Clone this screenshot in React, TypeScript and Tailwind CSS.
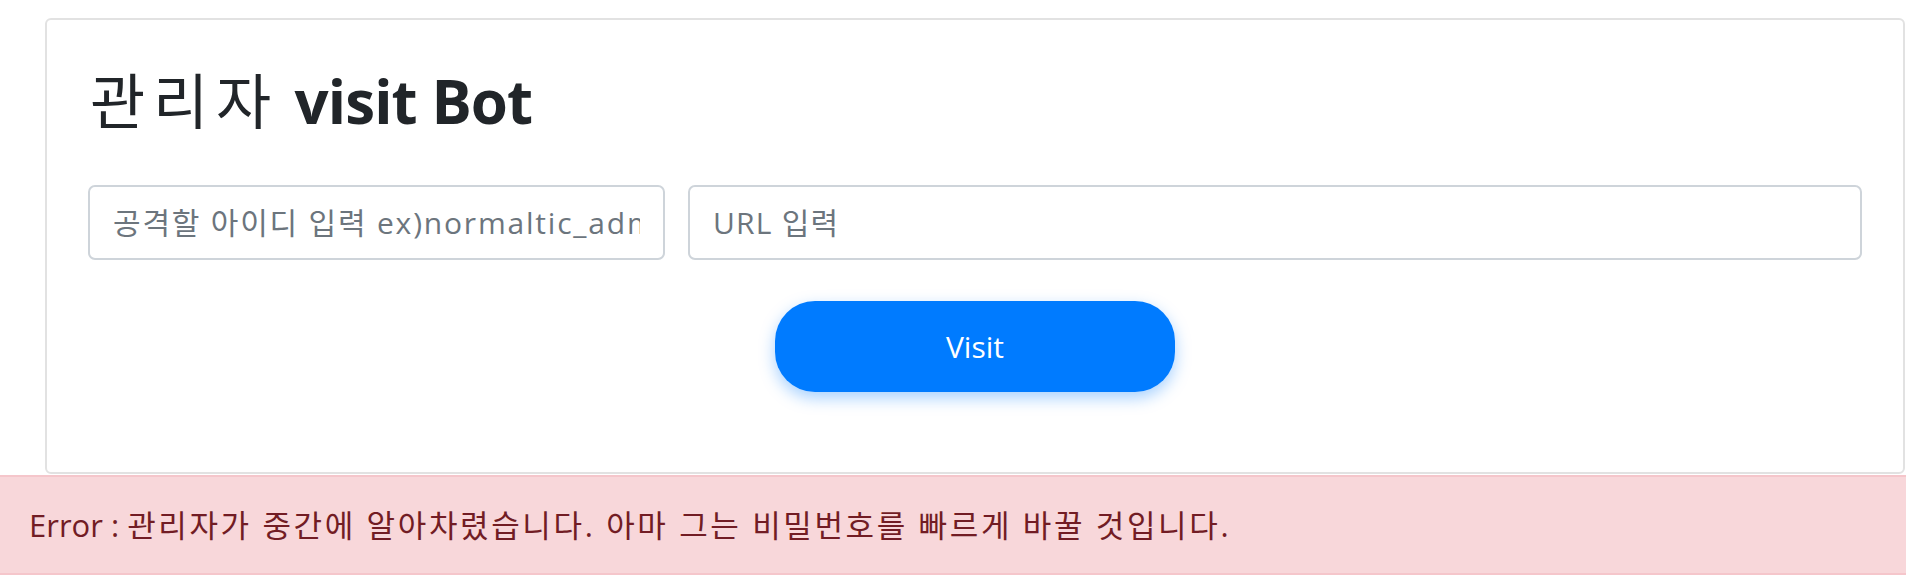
export default function App() {
  return (
    <div className="w-[1906px] h-[588px] bg-white pt-[18px] font-['Open_Sans','Noto_Sans_CJK_KR',sans-serif] text-[#212529] overflow-hidden">
      <div className="ml-[45px] mr-px h-[456px] border-2 border-[#e2e2e2] rounded-[6px] px-[41px] pt-[45px]">
        <h1 className="m-0 text-[60px] leading-[72px] font-normal">
          <span className="tracking-[0.13em] ml-[2px]">관리자</span>{" "}
          <b className="font-bold tracking-[-0.015em]">visit Bot</b>
        </h1>
        <div className="flex gap-[23px] mt-[48px]">
          <input
            className="w-[577px] h-[75px] border-2 border-[#ced4da] rounded-[7px] px-[23px] text-[30px] tracking-[0.06em] placeholder:text-[#6c757d] outline-none"
            placeholder="공격할 아이디 입력 ex)normaltic_admin"
          />
          <input
            className="flex-1 h-[75px] border-2 border-[#ced4da] rounded-[7px] px-[23px] text-[30px] tracking-[0.04em] placeholder:text-[#6c757d] outline-none"
            placeholder="URL 입력"
          />
        </div>
        <div className="flex justify-center mt-[41px]">
          <button className="w-[400px] h-[91px] rounded-[40px] bg-[#007bff] text-white text-[30px] shadow-[0_6px_16px_rgba(0,123,255,0.35)]">
            Visit
          </button>
        </div>
      </div>
      <div className="mt-px h-[100px] border-y-2 border-[#f5c6cb] bg-[#f8d7da] text-[#721c24] text-[31px] pl-[29px] flex items-center whitespace-pre">
        <span>Error : </span>
        <span className="tracking-[0.085em]">관리자가 중간에 알아차렸습니다. 아마 그는 비밀번호를 빠르게 바꿀 것입니다.</span>
      </div>
    </div>
  );
}
